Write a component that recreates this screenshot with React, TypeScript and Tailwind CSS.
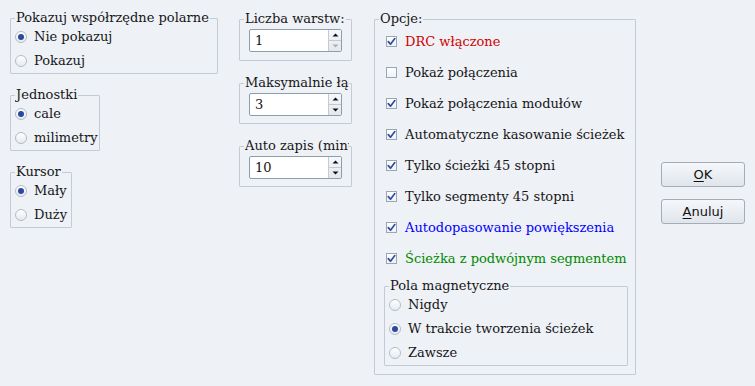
import React from "react";

const Radio = ({ checked }: { checked?: boolean }) => (
  <span className="w-[12px] h-[12px] shrink-0 rounded-full border border-[#b4bcc6] bg-linear-to-b from-white to-[#e6eaef] flex items-center justify-center">
    {checked && <span className="w-[6px] h-[6px] rounded-full bg-[#2c48a0]" />}
  </span>
);

const Check = ({ checked }: { checked?: boolean }) => (
  <span className="w-[11px] h-[11px] shrink-0 border border-[#9ca6b1] bg-linear-to-b from-white to-[#eef1f5] flex items-center justify-center">
    {checked && (
      <svg width="9" height="9" viewBox="0 0 9 9">
        <path d="M1.3 4.6 L3.5 7.2 L7.8 1.6" fill="none" stroke="#2d4ca6" strokeWidth="1.7" strokeLinecap="round" strokeLinejoin="round" />
      </svg>
    )}
  </span>
);

const RadioRow = ({ label, checked }: { label: string; checked?: boolean }) => (
  <div className="flex items-center h-[22px] pl-[4px] gap-[7px] whitespace-nowrap">
    <Radio checked={checked} />
    <span className="font-['DejaVu_Serif'] text-[13px]">{label}</span>
  </div>
);

const CheckRow = ({ label, checked, color }: { label: string; checked?: boolean; color: string }) => (
  <div className="flex items-center h-[31px] pl-[11px] gap-[8px] whitespace-nowrap">
    <Check checked={checked} />
    <span className={color}>{label}</span>
  </div>
);

const Legend = ({ children }: { children: React.ReactNode }) => (
  <legend className="ml-[4px] px-[1px] leading-[16px] whitespace-nowrap overflow-hidden max-w-[calc(100%-6px)] font-['DejaVu_Serif'] text-[13px]">
    {children}
  </legend>
);

const Spin = ({ value, downDisabled }: { value: string; downDisabled?: boolean }) => (
  <div className="h-[23px] flex border border-[#8f9daa] rounded-[2px] bg-white">
    <div className="flex-1 flex items-center pl-[5px] font-['DejaVu_Serif'] text-[13px]">{value}</div>
    <div className="w-[13px] flex flex-col border-l border-[#c2cad3] bg-linear-to-b from-[#f6f8fa] to-[#e3e8ed]">
      <div className="flex-1 flex items-center justify-center border-b border-[#c2cad3]">
        <svg width="7" height="4" viewBox="0 0 7 4"><path d="M0.5 3.5 L3.5 0.5 L6.5 3.5 Z" fill="#111" /></svg>
      </div>
      <div className="flex-1 flex items-center justify-center">
        <svg width="7" height="4" viewBox="0 0 7 4"><path d="M0.5 0.5 L3.5 3.5 L6.5 0.5 Z" fill={downDisabled ? "#a8b0b8" : "#111"} /></svg>
      </div>
    </div>
  </div>
);

const Button = ({ first, rest }: { first: string; rest: string }) => (
  <button className="w-[84px] h-[25px] rounded-[3px] border border-[#a3adb8] bg-linear-to-b from-[#f5f7fa] to-[#e0e5eb] font-['DejaVu_Sans'] text-[13px] text-[#111] flex items-center justify-center">
    <span><span className="underline underline-offset-2">{first}</span>{rest}</span>
  </button>
);

export default function App() {
  return (
    <div className="w-[755px] h-[386px] bg-[#eef1f6] flex font-['DejaVu_Serif'] text-[13px] text-[#161616]">
      {/* Column 1 */}
      <div className="w-[239px] pl-[10px] pt-[10px] flex flex-col items-start gap-[13px]">
        <fieldset className="w-[208px] min-w-0 border border-[#c3ccd6] rounded-[1px] flex flex-col gap-[2px] pb-[1px]">
          <Legend>Pokazuj współrzędne polarne</Legend>
          <RadioRow label="Nie pokazuj" checked />
          <RadioRow label="Pokazuj" />
        </fieldset>
        <fieldset className="w-[90px] min-w-0 border border-[#c3ccd6] rounded-[1px] flex flex-col gap-[2px] pb-[1px]">
          <Legend>Jednostki</Legend>
          <RadioRow label="cale" checked />
          <RadioRow label="milimetry" />
        </fieldset>
        <fieldset className="w-[62px] min-w-0 border border-[#c3ccd6] rounded-[1px] flex flex-col gap-[2px] pb-[1px]">
          <Legend>Kursor</Legend>
          <RadioRow label="Mały" checked />
          <RadioRow label="Duży" />
        </fieldset>
      </div>

      {/* Column 2 */}
      <div className="w-[113px] pt-[11px] flex flex-col gap-[14px]">
        <fieldset className="w-full min-w-0 border border-[#c3ccd6] rounded-[1px]">
          <Legend>Liczba warstw:</Legend>
          <div className="pt-[2px] pb-[8px] px-[9px]">
            <Spin value="1" downDisabled />
          </div>
        </fieldset>
        <fieldset className="w-full min-w-0 border border-[#c3ccd6] rounded-[1px]">
          <Legend>Maksymalnie łąc</Legend>
          <div className="pt-[2px] pb-[7px] px-[9px]">
            <Spin value="3" />
          </div>
        </fieldset>
        <fieldset className="w-full min-w-0 border border-[#c3ccd6] rounded-[1px]">
          <Legend>Auto zapis (minu</Legend>
          <div className="pt-[2px] pb-[7px] px-[9px]">
            <Spin value="10" />
          </div>
        </fieldset>
      </div>

      {/* Column 3 */}
      <div className="w-[262px] ml-[22px] pt-[11px]">
        <fieldset className="w-full min-w-0 border border-[#c3ccd6] rounded-[1px] pb-[8px]">
          <Legend>Opcje:</Legend>
          <div className="flex flex-col -mt-[1px]">
            <CheckRow label="DRC włączone" checked color="font-['DejaVu_Serif'] text-[13px] text-[#d40000]" />
            <CheckRow label="Pokaż połączenia" color="font-['DejaVu_Serif'] text-[13px] text-[#161616]" />
            <CheckRow label="Pokaż połączenia modułów" checked color="font-['DejaVu_Serif'] text-[13px] text-[#161616]" />
            <CheckRow label="Automatyczne kasowanie ścieżek" checked color="font-['DejaVu_Serif'] text-[13px] text-[#161616]" />
            <CheckRow label="Tylko ścieżki 45 stopni" checked color="font-['DejaVu_Serif'] text-[13px] text-[#161616]" />
            <CheckRow label="Tylko segmenty 45 stopni" checked color="font-['DejaVu_Serif'] text-[13px] text-[#161616]" />
            <CheckRow label="Autodopasowanie powiększenia" checked color="font-['DejaVu_Serif'] text-[13px] text-[#0000ff]" />
            <CheckRow label="Ścieżka z podwójnym segmentem" checked color="font-['DejaVu_Serif'] text-[13px] text-[#008a00]" />
          </div>
          <fieldset className="ml-[9px] mr-[7px] mt-[4px] min-w-0 border border-[#c3ccd6] rounded-[1px] flex flex-col gap-[2px] pb-[1px]">
            <Legend>Pola magnetyczne</Legend>
            <RadioRow label="Nigdy" />
            <RadioRow label="W trakcie tworzenia ścieżek" checked />
            <RadioRow label="Zawsze" />
          </fieldset>
        </fieldset>
      </div>

      {/* Buttons */}
      <div className="ml-[25px] pt-[162px] flex flex-col gap-[12px]">
        <Button first="O" rest="K" />
        <Button first="A" rest="nuluj" />
      </div>
    </div>
  );
}
